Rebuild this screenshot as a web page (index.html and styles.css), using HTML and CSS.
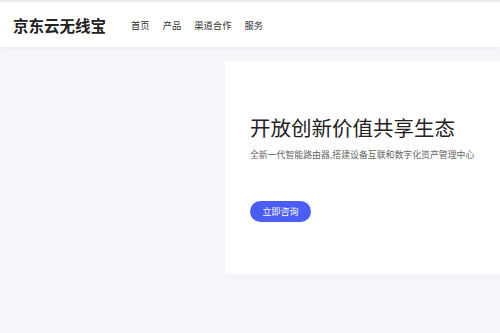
FILE: index.html
```html
<!DOCTYPE html>
<html lang="zh-CN">
<head>
    <meta charset="UTF-8">
    <meta name="viewport" content="width=device-width, initial-scale=1.0">
    <title>京东云无线宝</title>
    <link rel="stylesheet" href="styles.css">
</head>
<body>
    <div class="header">
        <div class="logo">京东云无线宝</div>
        <div class="nav">
            <a href="#">首页</a>
            <a href="#">产品</a>
            <a href="#">渠道合作</a>
            <a href="#">服务</a>
        </div>
    </div>

    <div class="main">
        <div class="banner">
            <h1>开放创新价值共享生态</h1>
            <p>全新一代智能路由器,搭建设备互联和数字化资产管理中心</p>
            <a class="btn" href="#">立即咨询</a>
        </div>
    </div>
</body>
</html>
```

FILE: styles.css
```css
body {
    margin: 0;
    font-family: "Noto Sans CJK SC", "Noto Sans", sans-serif;
    background-color: #f5f6fa;
    height: 333px;
    overflow: hidden;
}
.header {
    height: 45px;
    background: white;
    border-top: 2px solid #ececef;
    display: flex;
    align-items: center;
    padding-left: 13px;
    box-shadow: 0 2px 6px rgba(0,0,0,0.03);
    position: relative;
}
.logo {
    font-size: 15.5px;
    font-weight: bold;
    color: #222;
    margin-right: 25px;
}
.nav {
    display: flex;
    gap: 13px;
    padding-top: 1px;
}
.nav a {
    font-size: 9.3px;
    color: #333;
    text-decoration: none;
}
.main {
    padding-top: 14px;
    padding-left: 225px;
}
.banner {
    background: white;
    height: 213px;
    box-sizing: border-box;
    padding: 54px 0 0 25px;
}
.banner h1 {
    margin: 0;
    font-size: 20.5px;
    line-height: 24px;
    font-weight: normal;
    color: #222;
}
.banner p {
    margin: 9px 0 0;
    font-size: 8.9px;
    line-height: 14px;
    color: #666;
}
.btn {
    display: inline-flex;
    align-items: center;
    justify-content: center;
    margin-top: 39px;
    width: 61px;
    height: 21px;
    border-radius: 11px;
    background: #4a5ef5;
    color: white;
    font-size: 9px;
    text-decoration: none;
}
```
